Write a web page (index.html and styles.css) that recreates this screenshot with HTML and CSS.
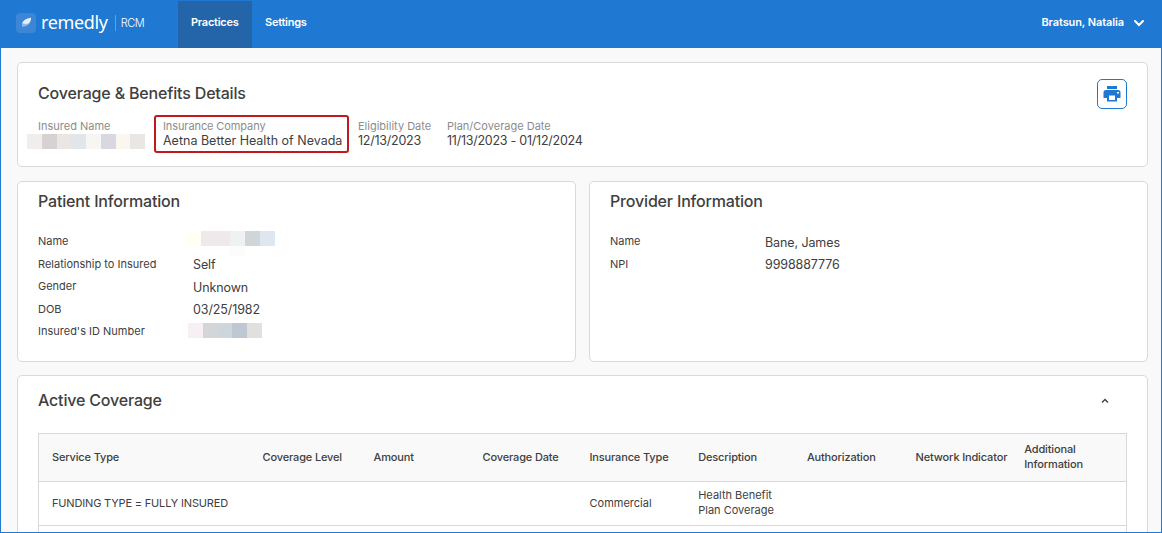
FILE: index.html
```html
<!DOCTYPE html>
<html lang="en">
<head>
    <meta charset="utf-8">
    <title>Coverage &amp; Benefits Details</title>
    <link rel="stylesheet" href="styles.css">
</head>
<body>
<div class="app">
    <header class="topbar">
        <div class="brand">
            <svg class="logo" width="20" height="20" viewBox="0 0 20 20">
                <rect width="20" height="20" rx="4" fill="#3c86d5"/>
                <path d="M6 13.800C5.500 9 9 6 15 4.800 15.300 9.500 12.500 13.500 6 13.800z" fill="#8dbcea"/>
                <path d="M6 10.800C7 7.500 10 5.600 15 4.800 15.200 8 13.500 10.300 10.500 11 9 11.200 8 10 6 10.800z" fill="#e3effa"/>
            </svg>
            <span class="brand-name">remedly</span>
            <span class="brand-sub">RCM</span>
        </div>
        <nav class="menu">
            <a class="menu-item active">Practices</a>
            <a class="menu-item">Settings</a>
        </nav>
        <div class="user">
            <span>Bratsun, Natalia</span>
            <svg class="user-arrow" width="10" height="7" viewBox="0 0 10 7"><path d="M1 1l4 4 4-4" fill="none" stroke="#fff" stroke-width="2" stroke-linecap="round"/></svg>
        </div>
    </header>

    <main class="page">
        <section class="card summary">
            <div class="summary-head">
                <h1 class="title coverage-title">Coverage &amp; Benefits Details</h1>
                <button class="print">
                    <svg width="18" height="16" viewBox="0 0 18 16">
                        <path fill="#1f78d1" fill-rule="evenodd" d="M4 0h10v3H4zM3 4h12a2.500 2.500 0 0 1 2.500 2.500V12H14v3.500H4V12H.5V6.500A2.500 2.500 0 0 1 3 4zM6 9.500v4.500h6V9.500zM14 6h2v1.500h-2z"/>
                    </svg>
                </button>
            </div>
            <div class="fields">
                <div class="field insured">
                    <span class="field-label">Insured Name</span>
                    <div class="mask mask-insured">
                        <i class="c1"></i><i class="c2"></i><i class="c3"></i><i class="c4"></i><i class="c5"></i><i class="c6"></i><i class="c7"></i><i class="c8"></i>
                    </div>
                </div>
                <div class="field company">
                    <span class="field-label">Insurance Company</span>
                    <span class="field-value">Aetna Better Health of Nevada</span>
                </div>
                <div class="field eligibility">
                    <span class="field-label">Eligibility Date</span>
                    <span class="field-value dates">12/13/2023</span>
                </div>
                <div class="field plan">
                    <span class="field-label">Plan/Coverage Date</span>
                    <span class="field-value dates">11/13/2023 - 01/12/2024</span>
                </div>
            </div>
        </section>

        <div class="columns">
            <section class="card info">
                <h2 class="title">Patient Information</h2>
                <dl class="details">
                    <dt>Name</dt>
                    <dd><div class="mask mask-name"><i class="c9"></i><i class="c10"></i><i class="c10"></i><i class="c11"></i><i class="c12"></i><i class="c13"></i></div></dd>
                    <dt>Relationship to Insured</dt>
                    <dd>Self</dd>
                    <dt>Gender</dt>
                    <dd>Unknown</dd>
                    <dt>DOB</dt>
                    <dd>03/25/1982</dd>
                    <dt>Insured's ID Number</dt>
                    <dd><div class="mask mask-id"><i class="c14"></i><i class="c15"></i><i class="c16"></i><i class="c17"></i><i class="c18"></i></div></dd>
                </dl>
            </section>
            <section class="card info">
                <h2 class="title">Provider Information</h2>
                <dl class="details">
                    <dt>Name</dt>
                    <dd>Bane, James</dd>
                    <dt>NPI</dt>
                    <dd>9998887776</dd>
                </dl>
            </section>
        </div>

        <section class="card coverage">
            <div class="coverage-head">
                <h2 class="title">Active Coverage</h2>
                <svg width="8" height="6" viewBox="0 0 8 6"><path d="M1 4.500l3-3 3 3" fill="none" stroke="#404040" stroke-width="1.400"/></svg>
            </div>
            <table class="grid">
                <colgroup>
                    <col class="w-service"><col class="w-level"><col class="w-amount"><col class="w-date"><col class="w-std"><col class="w-std"><col class="w-std"><col class="w-std"><col>
                </colgroup>
                <thead>
                    <tr>
                        <th>Service Type</th>
                        <th>Coverage Level</th>
                        <th>Amount</th>
                        <th>Coverage Date</th>
                        <th>Insurance Type</th>
                        <th>Description</th>
                        <th>Authorization</th>
                        <th>Network Indicator</th>
                        <th>Additional<br>Information</th>
                    </tr>
                </thead>
                <tbody>
                    <tr>
                        <td class="service">FUNDING TYPE = FULLY INSURED</td>
                        <td></td>
                        <td></td>
                        <td></td>
                        <td>Commercial</td>
                        <td>Health Benefit<br>Plan Coverage</td>
                        <td></td>
                        <td></td>
                        <td></td>
                    </tr>
                    <tr>
                        <td colspan="9"></td>
                    </tr>
                </tbody>
            </table>
        </section>
    </main>
</div>
</body>
</html>
```
FILE: styles.css
```css
* {
    box-sizing: border-box;
}

body {
    margin: 0;
    font-family: Inter, "Liberation Sans", sans-serif;
    font-size: 12px;
    color: #404040;
}

.app {
    height: 533px;
    overflow: hidden;
    border: 1px solid #1f78d1;
    background: #f9f9f9;
}

/* top bar */
.topbar {
    display: flex;
    height: 47px;
    background: #1f78d1;
    color: #fff;
}

.brand {
    display: flex;
    align-items: center;
    width: 177px;
    padding: 0 0 4px 15px;
}

.brand-name {
    margin-left: 5px;
    padding-bottom: 2px;
    font-family: "Noto Sans", sans-serif;
    font-size: 18px;
    line-height: 24px;
    letter-spacing: -0.35px;
}

.brand-sub {
    height: 16px;
    margin-left: 7px;
    padding-left: 5px;
    border-left: 1px solid #62a0de;
    font-size: 11px;
    font-weight: 300;
    line-height: 17px;
    letter-spacing: -0.4px;
}

.menu {
    display: flex;
}

.menu-item {
    padding: 0 13px;
    font-size: 11px;
    font-weight: 600;
    line-height: 42px;
    letter-spacing: -0.25px;
}

.active {
    width: 74px;
    background: #2465aa;
}

.user {
    display: flex;
    align-items: center;
    gap: 10px;
    margin-left: auto;
    padding: 0 17px 4px 0;
    font-size: 11px;
    font-weight: 600;
    letter-spacing: -0.1px;
}

.user span {
    padding-bottom: 2px;
}

.user-arrow {
    margin-top: 2px;
}

/* cards */
.page {
    padding: 14px 13px 0 16px;
}

.card {
    border: 1px solid #d9d9d9;
    border-radius: 5px;
    background: #fff;
}

.title {
    margin: 0;
    font-size: 16px;
    font-weight: 500;
    line-height: 20px;
    letter-spacing: -0.17px;
}

.summary {
    height: 105px;
    padding: 16px 20px 0;
}

.summary-head {
    display: flex;
    justify-content: space-between;
    height: 36px;
}

.coverage-title {
    padding-top: 4px;
}

.print {
    display: flex;
    align-items: center;
    justify-content: center;
    width: 30px;
    height: 30px;
    padding: 0;
    border: 1px solid #1f78d1;
    border-radius: 5px;
    background: #fff;
}

.fields {
    display: flex;
}

.field {
    height: 38px;
    padding-top: 4px;
    line-height: 14px;
    white-space: nowrap;
}

.field-label {
    display: block;
    font-size: 11px;
    color: #8c8c8c;
}

.company .field-label {
    letter-spacing: -0.1px;
}

.field-value {
    display: block;
    font-size: 12.500px;
    line-height: 15px;
}

.dates {
    letter-spacing: -0.25px;
}

.insured {
    width: 116px;
}

.company {
    width: 195px;
    padding: 2px 0 0 7px;
    border: 2px solid #c0181e;
    border-radius: 3px;
}

.eligibility {
    width: 98px;
    padding-left: 9px;
}

/* blurred out personal data */
.mask {
    display: flex;
}

.mask i {
    width: 14.750px;
    height: 15px;
    flex: none;
}

.mask-insured {
    margin: 1px 0 0 -11px;
}

.mask-name {
    margin: -4px 0 0 -7px;
    padding-bottom: 4px;
}

.mask-id {
    margin: -2px 0 0 -5px;
    padding-bottom: 2px;
}

.c1 { background: #f0eeeb; }
.c2 { background: #d6d2d4; }
.c3 { background: #ebe6e4; }
.c4 { background: #e0e6ea; }
.c5 { background: #f8f6f3; }
.c6 { background: #d9d7df; }
.c7 { background: #fbf6f0; }
.c8 { background: #e8e7e3; }
.c9 { background: #fffff3; }
.c10 { background: #efe9eb; }
.c11 { background: #f0f2f1; box-shadow: 0 10px #fcfcfc; }
.c12 { background: #cfd6d8; }
.c13 { background: #dee6ef; }
.c14 { background: #f6eff4; }
.c15 { background: #d4d5d7; }
.c16 { background: #cdd6da; }
.c17 { background: #bdc8d3; }
.c18 { background: #e2dfdf; }

.columns {
    display: grid;
    grid-template-columns: 559px 559px;
    justify-content: space-between;
    margin: 14px 0 13px;
}

.info {
    height: 181px;
    padding: 9px 20px 0;
}

.details {
    display: grid;
    grid-template-columns: 155px 1fr;
    grid-auto-rows: 22.500px;
    align-items: center;
    margin: 20px 0 0;
}

.details dt {
    padding-bottom: 2px;
    font-size: 11px;
    white-space: nowrap;
}

.details dd {
    margin: 0;
    font-size: 12.500px;
    letter-spacing: -0.1px;
}

/* coverage table */
.coverage {
    height: 200px;
    padding: 14px 20px 0;
}

.coverage-head {
    display: flex;
    align-items: center;
    justify-content: space-between;
    height: 20px;
    margin-bottom: 23px;
    padding-right: 18px;
}

.coverage-head svg {
    margin-top: 2px;
}

.grid {
    width: 1089px;
    table-layout: fixed;
    border-collapse: collapse;
    border: 1px solid #d9d9d9;
}

.grid tr {
    height: 44px;
    border-bottom: 1px solid #d9d9d9;
}

.grid thead tr {
    height: 48px;
    background: #f9f9f9;
}

.grid th,
.grid td {
    padding: 0 0 1px 13px;
    font-size: 11px;
    font-weight: 400;
    line-height: 15px;
    text-align: left;
    white-space: nowrap;
}

.grid th {
    font-weight: 500;
    letter-spacing: -0.15px;
}

.grid .service {
    letter-spacing: -0.17px;
}

.w-service { width: 211px; }
.w-level { width: 111px; }
.w-amount { width: 109px; }
.w-date { width: 107px; }
.w-std { width: 108.700px; }
```
